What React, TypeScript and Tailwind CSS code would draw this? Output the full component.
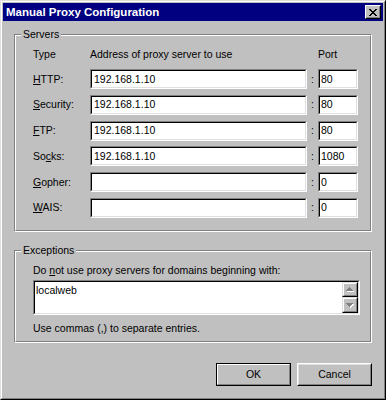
import type { ReactNode } from 'react';

interface ProxyRow {
  pre: string;
  key: string;
  post: string;
  address: string;
  port: string;
}

const rows: ProxyRow[] = [
  { pre: '', key: 'H', post: 'TTP:', address: '192.168.1.10', port: '80' },
  { pre: '', key: 'S', post: 'ecurity:', address: '192.168.1.10', port: '80' },
  { pre: '', key: 'F', post: 'TP:', address: '192.168.1.10', port: '80' },
  { pre: 'So', key: 'c', post: 'ks:', address: '192.168.1.10', port: '1080' },
  { pre: '', key: 'G', post: 'opher:', address: '', port: '0' },
  { pre: '', key: 'W', post: 'AIS:', address: '', port: '0' },
];

function Sunken({ className, children }: { className: string; children?: ReactNode }) {
  return (
    <div className={`border border-t-[#808080] border-l-[#808080] border-r-white border-b-white ${className}`}>
      <div className="h-full border border-t-black border-l-black border-r-[#dfdfdf] border-b-[#dfdfdf] bg-white">
        {children}
      </div>
    </div>
  );
}

function GroupBox({ label, children }: { label: string; children: ReactNode }) {
  return (
    <div className="relative border border-t-[#808080] border-l-[#808080] border-r-white border-b-white">
      <div className="border border-t-white border-l-white border-r-[#808080] border-b-[#808080]">{children}</div>
      {/* legend sits over the etched line */}
      <span className="absolute -top-[7px] left-[6px] bg-[#c0c0c0] px-[2px] leading-[13px]">{label}</span>
    </div>
  );
}

function Arrow({ down }: { down?: boolean }) {
  const tri = down ? 'M0 0h7v1h-1v1h-1v1h-1v1h-1v-1h-1v-1h-1v-1h-1z' : 'M3 0h1v1h1v1h1v1h1v1h-7v-1h1v-1h1v-1h1z';
  return (
    <svg width="8" height="5" viewBox="0 0 8 5" shapeRendering="crispEdges">
      <path d={tri} transform="translate(1 1)" fill="#ffffff" />
      <path d={tri} fill="#808080" />
    </svg>
  );
}

function ScrollButton({ down }: { down?: boolean }) {
  return (
    <div className="flex-1 border border-t-[#dfdfdf] border-l-[#dfdfdf] border-r-black border-b-black">
      <div className="h-full flex items-center justify-center bg-[#c0c0c0] border border-t-white border-l-white border-r-[#808080] border-b-[#808080]">
        <Arrow down={down} />
      </div>
    </div>
  );
}

function Button({ label, isDefault }: { label: string; isDefault?: boolean }) {
  if (isDefault) {
    return (
      <button className="w-[75px] h-[23px] border border-black">
        <div className="h-full flex items-center justify-center border border-t-white border-l-white border-r-[#808080] border-b-[#808080]">
          {label}
        </div>
      </button>
    );
  }
  return (
    <button className="w-[75px] h-[23px] border border-t-white border-l-white border-r-black border-b-black">
      <div className="h-full flex items-center justify-center border border-t-[#dfdfdf] border-l-[#dfdfdf] border-r-[#808080] border-b-[#808080]">
        {label}
      </div>
    </button>
  );
}

export default function App() {
  return (
    <div className="w-[386px] h-[400px] bg-[#c0c0c0] text-black text-[10.5px] leading-[13px] font-['Liberation_Sans',Arial,sans-serif] border border-t-[#dfdfdf] border-l-[#dfdfdf] border-r-black border-b-black">
      <div className="h-full flex flex-col p-px border border-t-white border-l-white border-r-[#808080] border-b-[#808080]">
        {/* Title bar */}
        <div className="h-[18px] shrink-0 flex items-center justify-between bg-[#000080] pl-[3px] pr-[2px]">
          <span className="text-white font-bold text-[11.5px]">Manual Proxy Configuration</span>
          <div className="w-[16px] h-[14px] border border-t-white border-l-white border-r-black border-b-black">
            <div className="h-full flex items-center justify-center bg-[#c0c0c0] border border-t-[#c0c0c0] border-l-[#c0c0c0] border-r-[#808080] border-b-[#808080]">
              <svg width="8" height="7" viewBox="0 0 8 7" shapeRendering="crispEdges">
                <path
                  d="M0 0h2v1h1v1h2v-1h1v-1h2v1h-1v1h-1v1h-1v1h1v1h1v1h1v1h-2v-1h-1v-1h-2v1h-1v1h-2v-1h1v-1h1v-1h1v-1h-1v-1h-1v-1h-1z"
                  fill="#000000"
                />
              </svg>
            </div>
          </div>
        </div>

        <div className="flex flex-col px-[11px] pt-[13px]">
          <GroupBox label="Servers">
            <div className="flex flex-col pl-[17px] pt-[12px] pb-[12px]">
              <div className="flex h-[13px] mb-[8px]">
                <span className="w-[57px]">Type</span>
                <span className="w-[228px]">Address of proxy server to use</span>
                <span>Port</span>
              </div>
              <div className="flex flex-col gap-[5.8px]">
                {rows.map(row => (
                  <div key={row.key} className="flex items-center h-[20px]">
                    <span className="w-[57px]">
                      {row.pre}
                      <span className="underline">{row.key}</span>
                      {row.post}
                    </span>
                    <Sunken className="w-[217px] h-[20px]">
                      <div className="h-full flex items-center pl-[2px]">{row.address}</div>
                    </Sunken>
                    <span className="w-[11px] text-center">:</span>
                    <Sunken className="w-[40px] h-[20px]">
                      <div className="h-full flex items-center pl-px">{row.port}</div>
                    </Sunken>
                  </div>
                ))}
              </div>
            </div>
          </GroupBox>

          <div className="mt-[18px]">
            <GroupBox label="Exceptions">
              <div className="flex flex-col pl-[17px] pr-[10px] pt-[12px] pb-[6px]">
                <span>
                  Do <span className="underline">n</span>ot use proxy servers for domains beginning with:
                </span>
                <Sunken className="mt-[3px] h-[35px]">
                  <div className="h-full flex">
                    <div className="flex-1 pl-[1px] pt-[2px]">localweb</div>
                    <div className="w-[16px] flex flex-col">
                      <ScrollButton />
                      <ScrollButton down />
                    </div>
                  </div>
                </Sunken>
                <span className="mt-[7px]">Use commas (,) to separate entries.</span>
              </div>
            </GroupBox>
          </div>

          <div className="mt-[20px] flex justify-end gap-[6px]">
            <Button label="OK" isDefault />
            <Button label="Cancel" />
          </div>
        </div>
      </div>
    </div>
  );
}
